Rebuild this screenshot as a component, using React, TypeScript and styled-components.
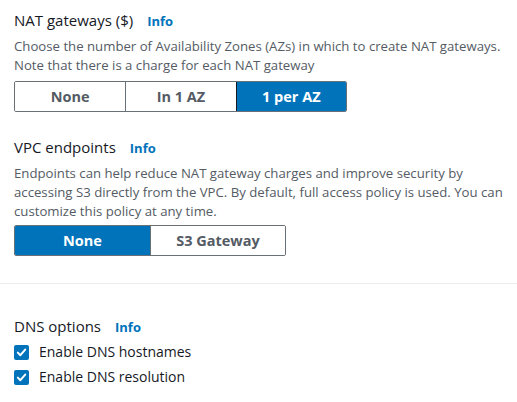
import styled, { createGlobalStyle } from 'styled-components';

const GlobalStyle = createGlobalStyle`
  html, body {
    margin: 0;
    padding: 0;
    background: #ffffff;
  }
  body {
    font-family: "Open Sans", "Noto Sans", sans-serif;
    color: #16191f;
  }
`;

const Page = styled.div`
  width: 517px;
  height: 402px;
  overflow: hidden;
  box-sizing: border-box;
  padding-top: 9px;
`;

const Section = styled.div<{ $gap?: number }>`
  padding: 0 14px;
  margin-top: ${({ $gap }) => $gap ?? 0}px;
`;

const Header = styled.div`
  display: flex;
  align-items: baseline;
  gap: 14px;
  font-size: 15px;
  line-height: 22px;
  color: #16191f;
`;

const InfoLink = styled.a`
  font-size: 13px;
  font-weight: 700;
  color: #0073bb;
  text-decoration: none;
`;

const Description = styled.p`
  margin: 5px 0 0;
  font-size: 13.2px;
  line-height: 19px;
  color: #545b64;
`;

const Segmented = styled.div<{ $width: number; $top: number }>`
  display: grid;
  grid-auto-flow: column;
  grid-auto-columns: 1fr;
  width: ${({ $width }) => $width}px;
  height: 31px;
  margin-top: ${({ $top }) => $top}px;
  border: 1px solid #687078;
  border-radius: 2px;
  box-sizing: border-box;
  overflow: hidden;
`;

const Segment = styled.button<{ $selected?: boolean }>`
  font-family: inherit;
  font-size: 14.5px;
  font-weight: 700;
  border: 0;
  border-left: 1px solid ${({ $selected }) => ($selected ? '#16191f' : '#687078')};
  background: ${({ $selected }) => ($selected ? '#0073bb' : '#ffffff')};
  color: ${({ $selected }) => ($selected ? '#ffffff' : '#545b64')};
  padding: 0;
  cursor: pointer;

  &:first-child {
    border-left: 0;
  }
`;

const Divider = styled.hr`
  margin: 27px 0 0;
  border: 0;
  border-top: 1px solid #eaeded;
`;

const CheckRow = styled.label`
  display: flex;
  align-items: center;
  gap: 10px;
  margin-top: 3px;
  font-size: 14px;
  line-height: 22px;
  color: #16191f;
`;

const Box = styled.span`
  display: inline-flex;
  align-items: center;
  justify-content: center;
  width: 15px;
  height: 15px;
  border-radius: 2px;
  background: #0073bb;
`;

const Check = () => (
  <Box>
    <svg width="11" height="11" viewBox="0 0 11 11">
      <path d="M1.8 5.6 L4.4 8.2 L9.2 2.6" fill="none" stroke="#fff" strokeWidth="2" strokeLinecap="round" strokeLinejoin="round" />
    </svg>
  </Box>
);

export default function App() {
  return (
    <Page>
      <GlobalStyle />
      <Section>
        <Header>
          <span>NAT gateways ($)</span>
          <InfoLink href="#">Info</InfoLink>
        </Header>
        <Description>
          Choose the number of Availability Zones (AZs) in which to create NAT gateways.
          <br />
          Note that there is a charge for each NAT gateway
        </Description>
        <Segmented $width={333} $top={6}>
          <Segment>None</Segment>
          <Segment>In 1 AZ</Segment>
          <Segment $selected>1 per AZ</Segment>
        </Segmented>
      </Section>

      <Section $gap={24}>
        <Header>
          <span>VPC endpoints</span>
          <InfoLink href="#">Info</InfoLink>
        </Header>
        <Description>
          Endpoints can help reduce NAT gateway charges and improve security by
          accessing S3 directly from the VPC. By default, full access policy is used. You can
          customize this policy at any time.
        </Description>
        <Segmented $width={272} $top={4}>
          <Segment $selected>None</Segment>
          <Segment>S3 Gateway</Segment>
        </Segmented>
      </Section>

      <Divider />

      <Section $gap={31}>
        <Header>
          <span>DNS options</span>
          <InfoLink href="#">Info</InfoLink>
        </Header>
        <CheckRow>
          <Check />
          Enable DNS hostnames
        </CheckRow>
        <CheckRow>
          <Check />
          Enable DNS resolution
        </CheckRow>
      </Section>
    </Page>
  );
}
